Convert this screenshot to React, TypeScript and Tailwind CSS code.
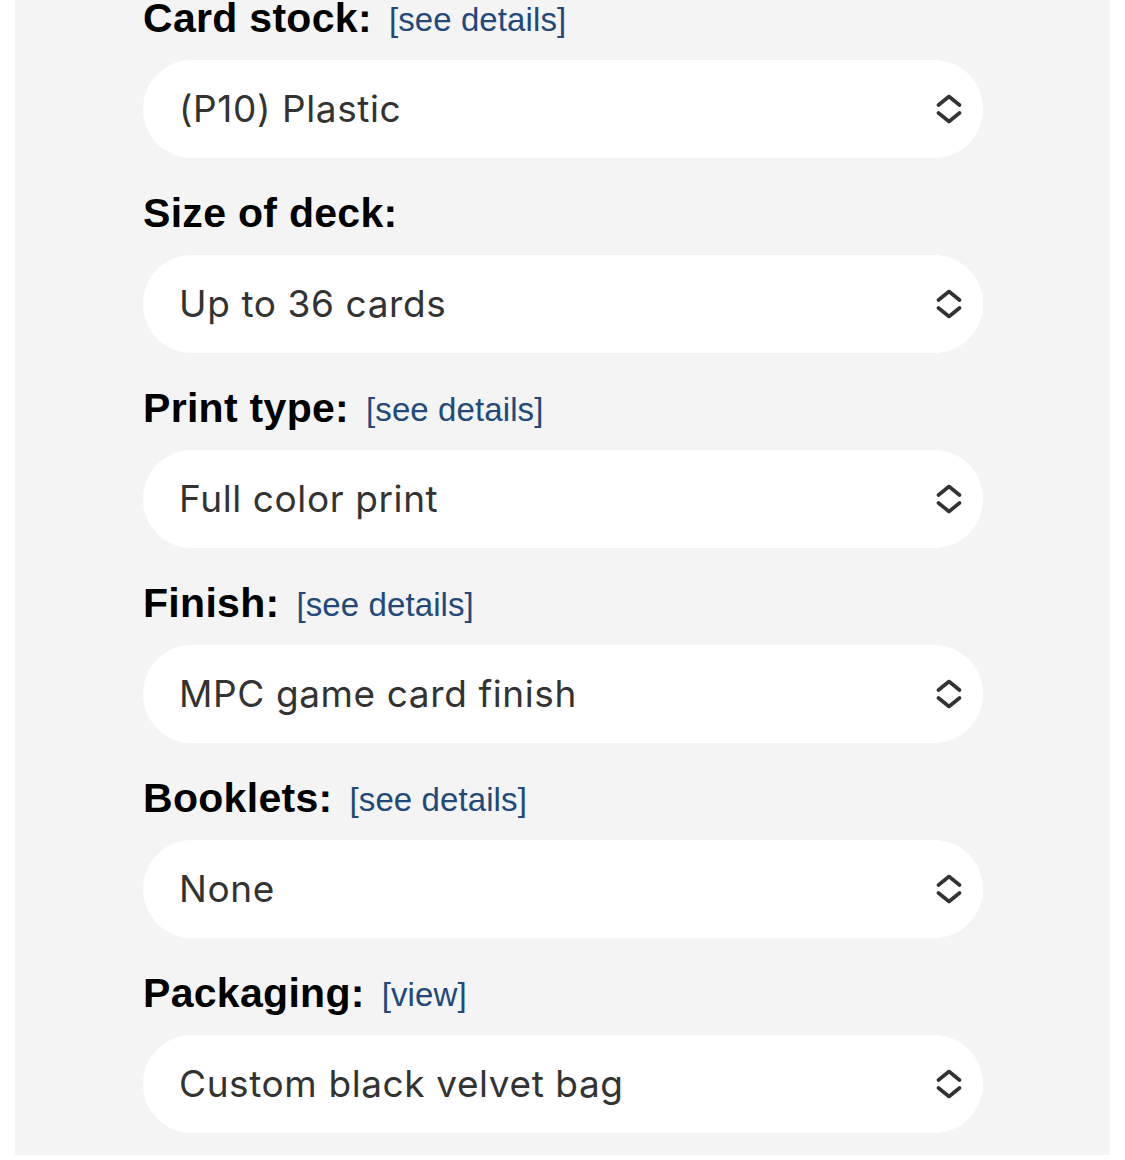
import React from "react";

type Field = { label: string; link?: string; value: string };

const fields: Field[] = [
  { label: "Card stock:", link: "[see details]", value: "(P10) Plastic" },
  { label: "Size of deck:", value: "Up to 36 cards" },
  { label: "Print type:", link: "[see details]", value: "Full color print" },
  { label: "Finish:", link: "[see details]", value: "MPC game card finish" },
  { label: "Booklets:", link: "[see details]", value: "None" },
  { label: "Packaging:", link: "[view]", value: "Custom black velvet bag" },
];

function Chevrons() {
  return (
    <svg width="26" height="30" viewBox="0 0 26 30" fill="none" className="shrink-0">
      <path d="M2.5 11 L13 2.5 L23.5 11" stroke="#333" strokeWidth="3.6" strokeLinecap="round" strokeLinejoin="round" />
      <path d="M2.5 19 L13 27.5 L23.5 19" stroke="#333" strokeWidth="3.6" strokeLinecap="round" strokeLinejoin="round" />
    </svg>
  );
}

export default function App() {
  return (
    <div className="h-[1160px] w-[1125px] overflow-hidden bg-white">
      <div className="ml-[15px] w-[1095px] h-[1160px] bg-[#f4f4f4] pl-[128px] pr-[127px]">
        <div className="flex flex-col -mt-[5px]">
          {fields.map((f, i) => (
            <div key={i} className={i === 0 ? "" : "mt-[32px]"}>
              <div className="flex items-baseline h-[46px] leading-[46px]">
                <span className="font-['Liberation_Sans',Arial,sans-serif] font-bold text-[41px] tracking-[0.3px] text-black">
                  {f.label}
                </span>
                {f.link && (
                  <a className="ml-[17px] relative -top-[1px] font-['Liberation_Sans',Arial,sans-serif] text-[33px] tracking-[0.1px] text-[#22497a]">
                    {f.link}
                  </a>
                )}
              </div>
              <div className="mt-[19px] h-[98px] rounded-full bg-white flex items-center justify-between pl-[36px] pr-[21px]">
                <span className="font-['Inter',sans-serif] text-[37px] tracking-[0.6px] text-[#333]">{f.value}</span>
                <Chevrons />
              </div>
            </div>
          ))}
        </div>
      </div>
    </div>
  );
}
